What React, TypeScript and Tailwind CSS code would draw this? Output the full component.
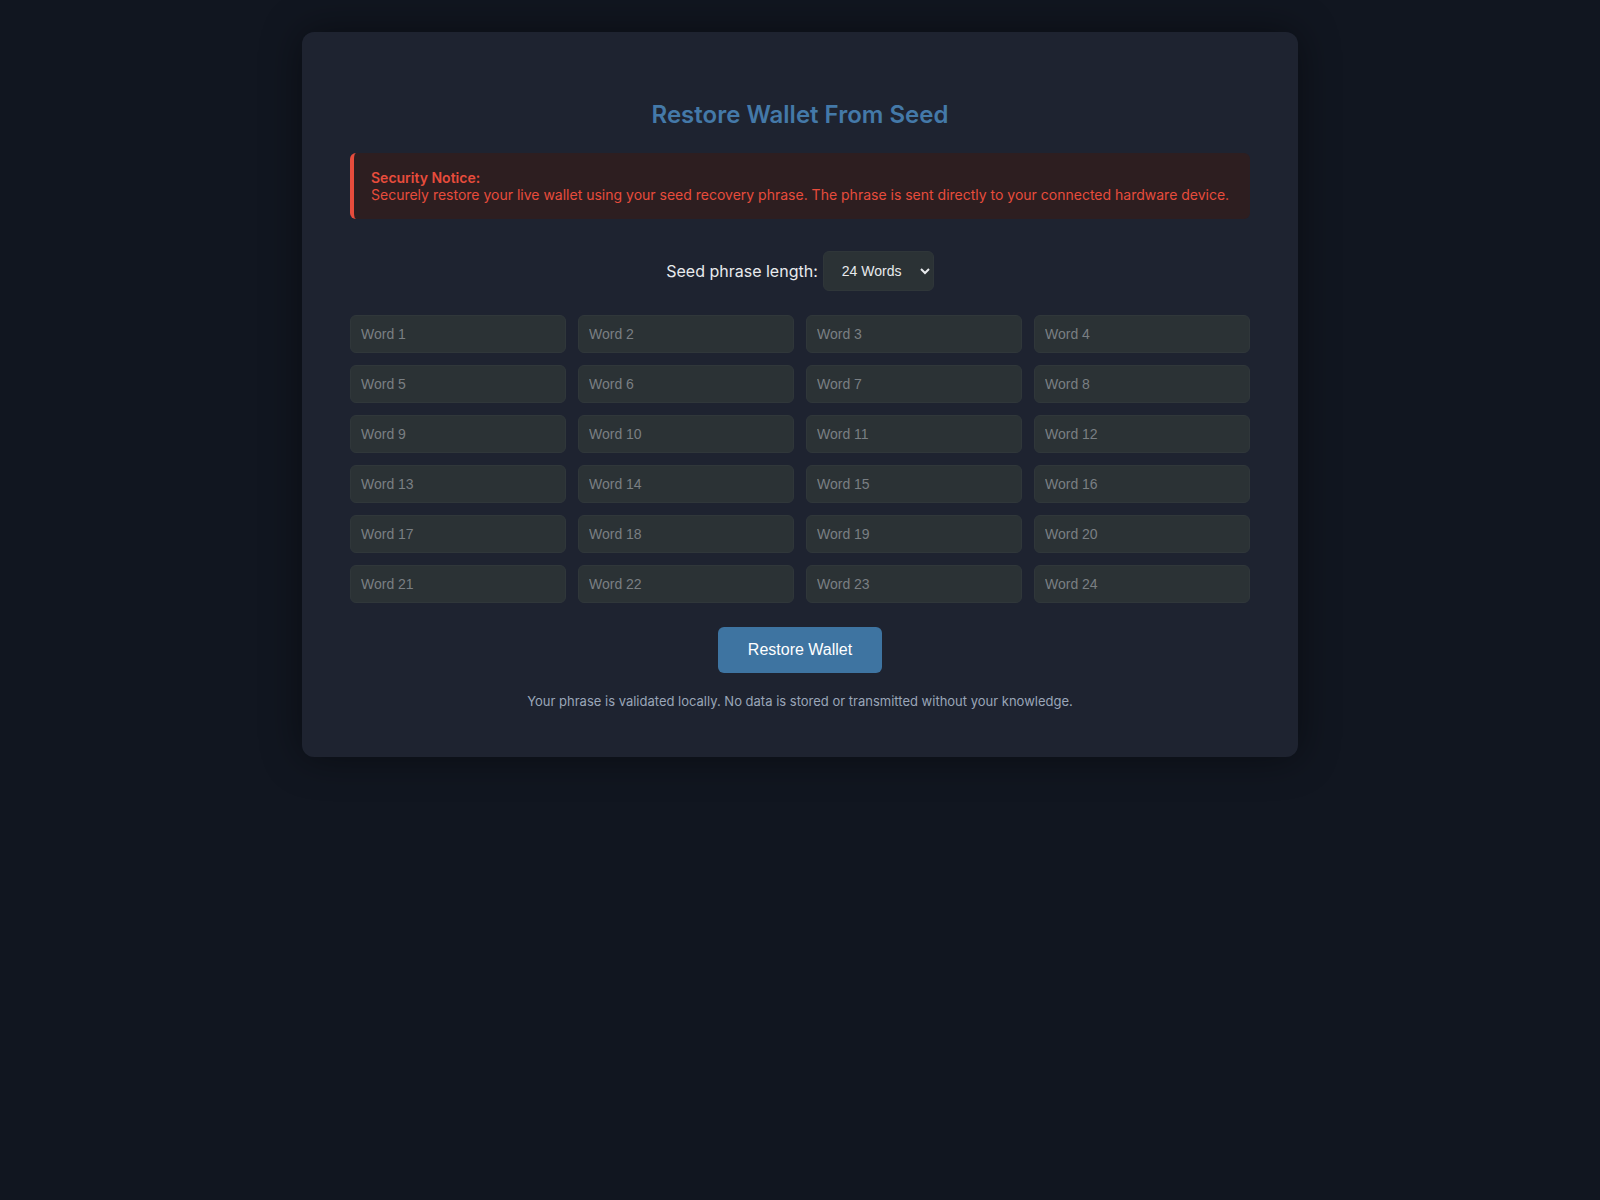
import { useState } from "react";

const inter = "font-['Inter',_'Noto_Sans',_sans-serif]";
const arial = "font-['Liberation_Sans',_Arial,_sans-serif]";

export default function App() {
  const [count, setCount] = useState(24);
  const words = Array.from({ length: count }, (_, i) => i + 1);

  return (
    <div className={`min-h-[1200px] bg-[#111620] pt-8 ${inter}`}>
      <div className="mx-auto w-[996px] rounded-xl bg-[#1e2330] px-12 pb-[47px] pt-[67px] shadow-[0_0_40px_rgba(0,0,0,0.45)]">
        <h1 className="text-center text-2xl font-semibold leading-8 text-[#4479a8]">
          Restore Wallet From Seed
        </h1>

        {/* Notice */}
        <div className="mt-[22px] rounded-md border-l-4 border-[#e74c3c] bg-[#2d1e20] py-4 pl-[17px] pr-[14px] text-sm leading-[17px] text-[#e74c3c]">
          <div className="font-semibold">Security Notice:</div>
          <div>
            Securely restore your live wallet using your seed recovery phrase. The phrase is sent directly to
            your connected hardware device.
          </div>
        </div>

        {/* Length */}
        <div className="mt-8 flex items-center justify-center gap-[5px]">
          <label className="text-base text-[#e8eaed]">Seed phrase length:</label>
          <select
            value={count}
            onChange={(e) => setCount(Number(e.target.value))}
            className={`h-10 w-[111px] rounded-md border border-[#2f3639] bg-[#2b3235] pl-[14px] pr-2 text-sm text-[#e8eaed] ${arial}`}
          >
            <option value={12}>12 Words</option>
            <option value={24}>24 Words</option>
          </select>
        </div>

        {/* Words */}
        <div className="mt-6 grid grid-cols-4 gap-3">
          {words.map((n) => (
            <input
              key={n}
              placeholder={`Word ${n}`}
              className={`h-[38px] rounded-md border border-[#30373a] bg-[#2b3235] px-[10px] text-sm text-[#e8eaed] placeholder:text-[#7a7f83] outline-none ${arial}`}
            />
          ))}
        </div>

        <div className="mt-6 flex justify-center">
          <button className={`h-[46px] rounded-md bg-[#3e74a1] px-[30px] text-base text-white ${arial}`}>
            Restore Wallet
          </button>
        </div>

        <p className="mt-[19px] text-center text-[13px] leading-[18px] text-[#9aa6b8]">
          Your phrase is validated locally. No data is stored or transmitted without your knowledge.
        </p>
      </div>
    </div>
  );
}
